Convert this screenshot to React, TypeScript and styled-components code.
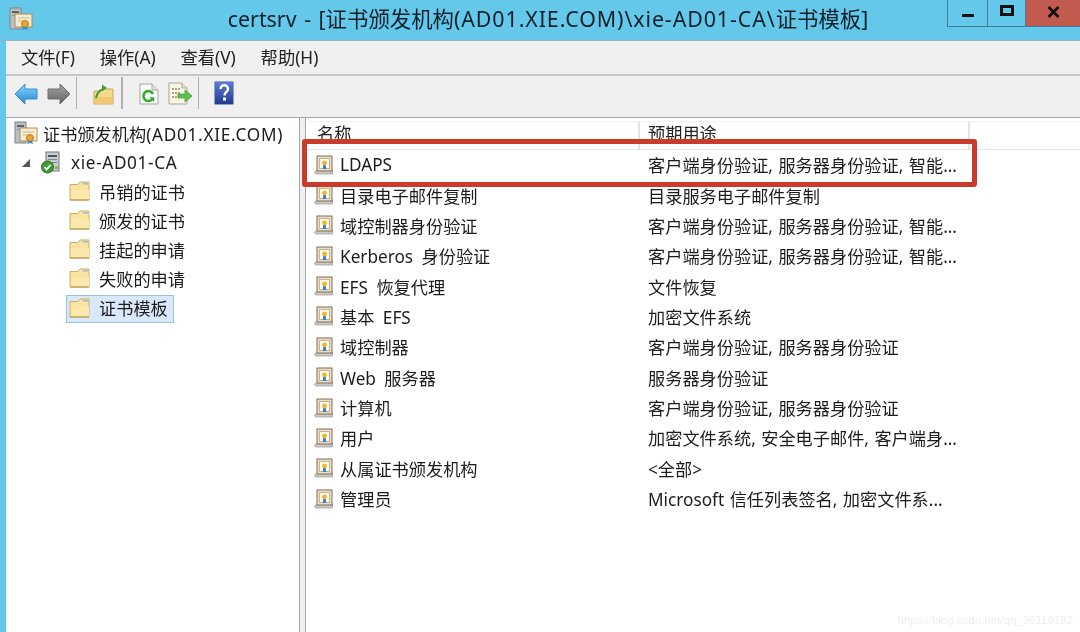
import React from "react";
import styled, { createGlobalStyle } from "styled-components";

const Global = createGlobalStyle`
  html, body { margin: 0; padding: 0; background: #fff; }
  body { font-family: "Noto Sans", "Noto Sans CJK SC", sans-serif; color: #1c1c1c; }
`;

const Page = styled.div`
  position: relative;
  width: 1080px;
  height: 632px;
  overflow: hidden;
  display: flex;
  flex-direction: column;
  background: #63c8ea;
  filter: blur(0.35px);
`;

const TitleBar = styled.header`
  height: 41px;
  flex: none;
  display: grid;
  grid-template-columns: 1fr auto 1fr;
  border-bottom: 1px solid #8fb6c6;
  box-sizing: border-box;
`;

const TitleIconCell = styled.div`
  padding: 7px 0 0 9px;
`;

const TitleText = styled.div`
  font-size: 21.4px;
  line-height: 38px;
  padding-left: 16px;
  color: #10202a;
  white-space: nowrap;
  word-spacing: 2px;
`;

const Wide = styled.span`
  letter-spacing: 0.042em;
`;

const WindowButtons = styled.div`
  display: flex;
  justify-content: flex-end;
  align-items: flex-start;
`;

const WinButton = styled.div<{ $w: number; $dy: number; $close?: boolean }>`
  width: ${(p) => p.$w}px;
  height: 27px;
  box-sizing: border-box;
  display: flex;
  align-items: center;
  justify-content: center;
  padding-${(p) => (p.$dy < 0 ? "bottom" : "top")}: ${(p) => Math.abs(p.$dy)}px;
  background: ${(p) => (p.$close ? "#c25a50" : "transparent")};
  border-left: 1px solid #3f7d95;
  border-bottom: 1px solid #3f7d95;
`;

const Body = styled.div`
  flex: 1;
  min-height: 0;
  margin-left: 6px;
  display: flex;
  flex-direction: column;
  background: #f0f0f0;
`;

const MenuBar = styled.nav`
  height: 35px;
  flex: none;
  box-sizing: border-box;
  display: flex;
  align-items: center;
  padding: 0 0 2px 15px;
  gap: 24.8px;
  font-size: 17.3px;
  border-bottom: 2px solid #c6c7c9;
`;

const MenuItem = styled.span`
  white-space: nowrap;
  color: #222;
`;

const Toolbar = styled.div`
  height: 42px;
  flex: none;
  box-sizing: border-box;
  display: flex;
  align-items: flex-start;
  border-bottom: 1px solid #a4a8ab;
  padding-left: 7px;
`;

const ToolIcon = styled.div<{ $ml: number; $mt: number }>`
  margin-left: ${(p) => p.$ml}px;
  margin-top: ${(p) => p.$mt}px;
  display: flex;
  flex: none;
`;

const ToolSep = styled.div<{ $ml: number }>`
  width: 1.5px;
  height: 32px;
  margin-top: 1px;
  margin-left: ${(p) => p.$ml}px;
  background: #b0b0b0;
  flex: none;
`;

const Panes = styled.div`
  flex: 1;
  min-height: 0;
  display: flex;
`;

const TreePane = styled.aside`
  width: 293px;
  flex: none;
  margin-left: 1px;
  background: #fff;
  border-right: 1px solid #a4a8ab;
  box-sizing: border-box;
  padding-top: 2px;
`;

const Splitter = styled.div`
  width: 5px;
  flex: none;
`;

const ListPane = styled.section`
  flex: 1;
  background: #fff;
  border-left: 1px solid #a4a8ab;
  padding: 3px 0 0 2px;
`;

const TreeRow = styled.div<{ $indent: number; $gap: number; $pb?: number }>`
  height: 29px;
  box-sizing: border-box;
  display: flex;
  align-items: center;
  padding: 0 0 ${(p) => p.$pb ?? 3}px ${(p) => p.$indent}px;
  gap: ${(p) => p.$gap}px;
  font-size: 17.2px;
  white-space: nowrap;
`;

const ServerName = styled.span`
  margin-left: 9px;
  letter-spacing: 0.037em;
`;

const Twist = styled.span`
  width: 0;
  height: 0;
  border-style: solid;
  border-width: 0 0 8px 8px;
  border-color: transparent transparent #555 transparent;
  margin-right: 11px;
`;

const SelectedItem = styled.div`
  display: flex;
  align-items: center;
  gap: 9px;
  height: 28px;
  width: 108px;
  box-sizing: border-box;
  margin: 3px 0 0 -3px;
  padding: 0 0 2px 2px;
  background: #d9e8fb;
  border: 1px solid #9cc0ea;
`;

const ListHeader = styled.div`
  height: 29px;
  display: grid;
  grid-template-columns: 332px 330px;
  box-sizing: border-box;
  border-bottom: 1px solid #e3e3e3;
  border-top: 1px solid #f2f2f2;
`;

const HeaderCell = styled.div`
  font-size: 17.2px;
  line-height: 23px;
  padding-left: 9px;
  border-right: 2px solid #e3e3e3;
  color: #222;
  overflow: hidden;
  white-space: nowrap;
  &:last-child {
    padding-left: 8px;
  }
`;

const Row = styled.div`
  height: 30.36px;
  box-sizing: border-box;
  padding-bottom: 1px;
  display: grid;
  grid-template-columns: 332px 330px;
  align-items: center;
  font-size: 17.2px;
`;

const NameCell = styled.div`
  display: flex;
  align-items: center;
  gap: 6px;
  padding-left: 6px;
  white-space: nowrap;
  word-spacing: 4px;
`;

const PurposeCell = styled.div`
  padding-left: 8px;
  white-space: nowrap;
  word-spacing: 1px;
`;

const Highlight = styled.div`
  position: absolute;
  left: 302px;
  top: 139px;
  width: 675px;
  height: 48px;
  box-sizing: border-box;
  border: 5px solid #c93b2a;
  border-radius: 3px;
  pointer-events: none;
`;

const Watermark = styled.div`
  position: absolute;
  right: 7px;
  bottom: 6px;
  font-family: "Liberation Sans", sans-serif;
  font-size: 11.5px;
  color: #efefef;
`;

const CaIcon = ({ size = 24 }: { size?: number }) => (
  <svg width={size} height={size} viewBox="0 0 24 24">
    <rect x="1" y="1" width="11" height="21" fill="#b9c0c5" stroke="#7d868c" />
    <rect x="3" y="4" width="7" height="2" fill="#59636a" />
    <rect x="3" y="8" width="7" height="1" fill="#8b949a" />
    <rect x="6" y="7" width="17" height="13" fill="#f5ecd2" stroke="#b58a55" />
    <path d="M9 11h11M9 14h6" stroke="#d3b88a" strokeWidth="1" />
    <circle cx="16" cy="17" r="3.4" fill="#eaa62c" stroke="#b9761a" />
    <path d="M14 20l-1 3 3-1 3 1-1-3" fill="#3f86c9" />
  </svg>
);

const ServerIcon = () => (
  <svg width="21" height="23" viewBox="0 0 21 23" style={{ flex: "none" }}>
    <rect x="5" y="1" width="13" height="19" fill="#c9ced2" stroke="#6f777d" />
    <rect x="7" y="4" width="9" height="2" fill="#4c555c" />
    <rect x="7" y="8" width="9" height="1" fill="#7e878d" />
    <rect x="7" y="11" width="9" height="1" fill="#7e878d" />
    <rect x="14" y="15" width="3" height="3" fill="#7bbf4a" />
    <circle cx="6.5" cy="16" r="6" fill="#3f9a35" stroke="#2a7325" />
    <path d="M3.5 16l2.2 2.4 4-4.6" fill="none" stroke="#fff" strokeWidth="1.7" />
  </svg>
);

const FolderIcon = () => (
  <svg width="21" height="20" viewBox="0 0 21 20" style={{ flex: "none" }}>
    <path d="M1 3.5h8l2-2.5h9v18H1z" fill="#f9e39f" stroke="#cdae6c" />
    <path d="M2 9h18v9H2z" fill="#fbe8ad" />
    <rect x="14" y="2" width="5" height="1.6" fill="#8fc2e8" />
    <path d="M1 19h19" stroke="#b99750" />
  </svg>
);

const CertIcon = () => (
  <svg width="20" height="20" viewBox="0 0 20 20" style={{ flex: "none" }}>
    <path d="M0.5 17l3-2h15v4H1.5z" fill="#c7c9c5" stroke="#9a9c98" strokeWidth="0.7" />
    <rect x="3" y="1" width="15" height="15" fill="#e9dfcd" stroke="#8a6a55" />
    <rect x="5.5" y="3.5" width="10" height="10" fill="#fdfbef" stroke="#c7b48c" />
    <circle cx="10.5" cy="8" r="2.4" fill="#f0b52f" />
    <path d="M9.3 10l-.6 4h3.6l-.6-4z" fill="#3f7fc9" />
  </svg>
);

const Back = () => (
  <svg width="24" height="22" viewBox="0 0 24 22">
    <defs>
      <linearGradient id="bk" x1="0" y1="0" x2="0" y2="1">
        <stop offset="0" stopColor="#8fd4fb" />
        <stop offset="1" stopColor="#1f86d8" />
      </linearGradient>
    </defs>
    <path d="M1 11L11 1v5h12v10H11v5z" fill="url(#bk)" stroke="#3c8fd0" />
  </svg>
);

const Forward = () => (
  <svg width="24" height="22" viewBox="0 0 24 22">
    <defs>
      <linearGradient id="fw" x1="0" y1="0" x2="0" y2="1">
        <stop offset="0" stopColor="#a6a6a6" />
        <stop offset="1" stopColor="#616161" />
      </linearGradient>
    </defs>
    <path d="M23 11L13 1v5H1v10h12v5z" fill="url(#fw)" stroke="#6d6d6d" />
  </svg>
);

const FolderUp = () => (
  <svg width="21" height="22" viewBox="0 0 21 22">
    <path d="M1 8h6l2-2h11v15H1z" fill="#f6d98b" stroke="#c9a65f" />
    <path d="M1.5 14h18v6.5h-18z" fill="#f1c873" />
    <path d="M3 15c1-5 3-8 8-9" fill="none" stroke="#3f9a35" strokeWidth="2.2" />
    <path d="M9 1.5l5 3.5-5 3z" fill="#3f9a35" />
  </svg>
);

const Refresh = () => (
  <svg width="20" height="22" viewBox="0 0 20 22">
    <path d="M1 1h12l6 6v14H1z" fill="#fbfbf8" stroke="#a3a3a0" />
    <path d="M13 1v6h6" fill="#e4e4e0" stroke="#a3a3a0" />
    <path d="M13.5 16a5 5 0 1 1 .5-5" fill="none" stroke="#36a836" strokeWidth="2.6" />
    <path d="M10.5 14l5 .5-.5 4.5z" fill="#36a836" />
  </svg>
);

const Export = () => (
  <svg width="25" height="23" viewBox="0 0 25 23">
    <path d="M1 1h13l5 5v16H1z" fill="#fbf6e2" stroke="#a8a596" />
    <path d="M14 1v5h5" fill="#e9e5d2" stroke="#a8a596" />
    <path d="M4 7h8M4 11h8M4 15h6" stroke="#555" strokeWidth="1.2" strokeDasharray="2 1" />
    <path d="M10 12h7V8l7 6-7 6v-4h-7z" fill="#62c04a" stroke="#3f9a35" strokeWidth="0.7" />
  </svg>
);

const Help = () => (
  <svg width="20" height="24" viewBox="0 0 20 24">
    <defs>
      <linearGradient id="hp" x1="0" y1="0" x2="0" y2="1">
        <stop offset="0" stopColor="#5c7fd6" />
        <stop offset="1" stopColor="#22398f" />
      </linearGradient>
    </defs>
    <rect x="0.5" y="0.5" width="19" height="23" rx="1" fill="url(#hp)" stroke="#8fa0cf" />
    <path d="M6.5 8c0-5 7.5-5 7.5 0 0 3-3.5 3-3.5 6.5" fill="none" stroke="#fff" strokeWidth="2.4" />
    <rect x="9" y="16.5" width="3" height="3" fill="#fff" />
  </svg>
);

const menus = ["文件(F)", "操作(A)", "查看(V)", "帮助(H)"];
const folders = ["吊销的证书", "颁发的证书", "挂起的申请", "失败的申请"];
const both = "客户端身份验证, 服务器身份验证, 智能...";
const rows: [string, string][] = [
  ["LDAPS", both],
  ["目录电子邮件复制", "目录服务电子邮件复制"],
  ["域控制器身份验证", both],
  ["Kerberos 身份验证", both],
  ["EFS 恢复代理", "文件恢复"],
  ["基本 EFS", "加密文件系统"],
  ["域控制器", "客户端身份验证, 服务器身份验证"],
  ["Web 服务器", "服务器身份验证"],
  ["计算机", "客户端身份验证, 服务器身份验证"],
  ["用户", "加密文件系统, 安全电子邮件, 客户端身..."],
  ["从属证书颁发机构", "<全部>"],
  ["管理员", "Microsoft 信任列表签名, 加密文件系..."],
];

export default function App() {
  return (
    <Page>
      <Global />
      <TitleBar>
        <TitleIconCell>
          <CaIcon />
        </TitleIconCell>
        <TitleText>
          certsrv - [证书颁发机构<Wide>(AD01.XIE.COM)\xie-AD01-CA\</Wide>证书模板]
        </TitleText>
        <WindowButtons>
          <WinButton $w={40} $dy={3}>
            <svg width="12" height="4" viewBox="0 0 12 4">
              <rect width="12" height="3" y="1" fill="#111" />
            </svg>
          </WinButton>
          <WinButton $w={38} $dy={-5}>
            <svg width="14" height="11" viewBox="0 0 14 11">
              <path d="M1.5 1.5h11v8h-11z" fill="none" stroke="#111" strokeWidth="3" />
            </svg>
          </WinButton>
          <WinButton $w={55} $dy={-3} $close>
            <svg width="13" height="12" viewBox="0 0 13 12">
              <path d="M1.5 1l10 10M11.5 1l-10 10" stroke="#111" strokeWidth="2.6" />
            </svg>
          </WinButton>
        </WindowButtons>
      </TitleBar>
      <Body>
        <MenuBar>
          {menus.map((m) => (
            <MenuItem key={m}>{m}</MenuItem>
          ))}
        </MenuBar>
        <Toolbar>
          <ToolIcon $ml={1} $mt={7}><Back /></ToolIcon>
          <ToolIcon $ml={9} $mt={7}><Forward /></ToolIcon>
          <ToolSep $ml={4.5} />
          <ToolIcon $ml={15.5} $mt={7}><FolderUp /></ToolIcon>
          <ToolSep $ml={7.5} />
          <ToolIcon $ml={16.5} $mt={7}><Refresh /></ToolIcon>
          <ToolIcon $ml={9} $mt={6}><Export /></ToolIcon>
          <ToolSep $ml={4.5} />
          <ToolIcon $ml={14.5} $mt={5}><Help /></ToolIcon>
        </Toolbar>
        <Panes>
          <TreePane>
            <TreeRow $indent={7} $gap={5}>
              <CaIcon size={24} />
              <span>
                证书颁发机构<Wide>(AD01.XIE.COM)</Wide>
              </span>
            </TreeRow>
            <TreeRow $indent={15} $gap={0} $pb={2}>
              <Twist />
              <ServerIcon />
              <ServerName>xie-AD01-CA</ServerName>
            </TreeRow>
            {folders.map((f) => (
              <TreeRow key={f} $indent={62} $gap={9}>
                <FolderIcon />
                {f}
              </TreeRow>
            ))}
            <TreeRow $indent={62} $gap={0}>
              <SelectedItem>
                <FolderIcon />
                证书模板
              </SelectedItem>
            </TreeRow>
          </TreePane>
          <Splitter />
          <ListPane>
            <ListHeader>
              <HeaderCell>名称</HeaderCell>
              <HeaderCell>预期用途</HeaderCell>
            </ListHeader>
            {rows.map(([n, p]) => (
              <Row key={n}>
                <NameCell>
                  <CertIcon />
                  {n}
                </NameCell>
                <PurposeCell>{p}</PurposeCell>
              </Row>
            ))}
          </ListPane>
        </Panes>
      </Body>
      <Highlight />
      <Watermark>https://blog.csdn.net/qq_36119192</Watermark>
    </Page>
  );
}
